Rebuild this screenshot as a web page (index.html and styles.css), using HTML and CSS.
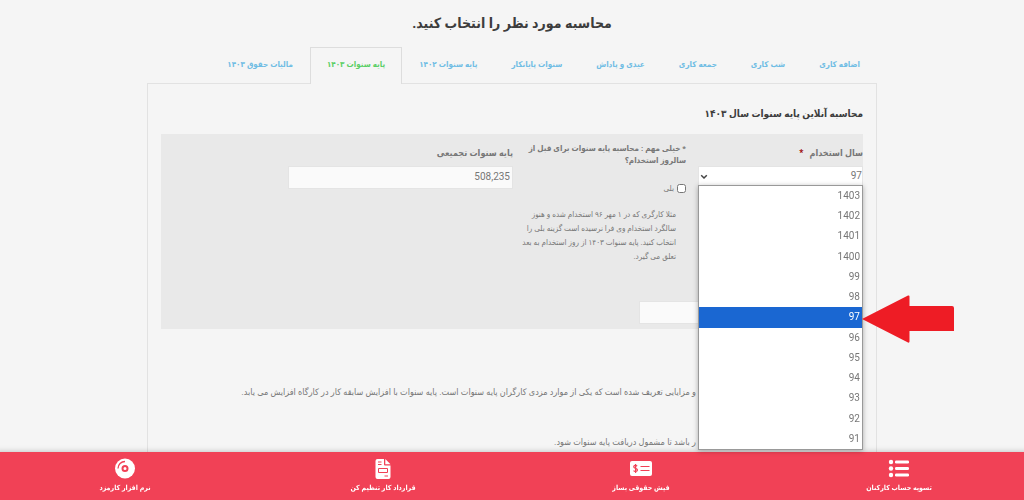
FILE: index.html
```html
<!DOCTYPE html>
<html lang="fa" dir="rtl">
<head>
<meta charset="utf-8">
<meta name="viewport" content="width=device-width, initial-scale=1">
<title>محاسبه آنلاین پایه سنوات</title>
<link rel="stylesheet" href="styles.css">
</head>
<body>
<main class="page">
  <h1 class="title">محاسبه مورد نظر را انتخاب کنید.</h1>
  <nav class="tabs">
    <a class="tab" href="#overtime">اضافه کاری</a>
    <a class="tab" href="#night">شب کاری</a>
    <a class="tab" href="#friday">جمعه کاری</a>
    <a class="tab" href="#bonus">عیدی و پاداش</a>
    <a class="tab" href="#severance">سنوات پایانکار</a>
    <a class="tab" href="#base1402">پایه سنوات ۱۴۰۲</a>
    <a class="tab tab-active" href="#base1403">پایه سنوات ۱۴۰۳</a>
    <a class="tab" href="#tax">مالیات حقوق ۱۴۰۳</a>
  </nav>
  <section class="panel">
    <h2 class="subtitle">محاسبه آنلاین پایه سنوات سال ۱۴۰۳</h2>
    <form class="form">
      <div class="field field-year">
        <label class="label" for="year">سال استخدام <span class="required">*</span></label>
        <div class="select-wrap">
          <select class="control select" id="year"><option>97</option></select>
          <svg class="chevron" viewBox="0 0 8 6"><path d="M1.2 1.2 4 4l2.8-2.8"/></svg>
          <ul class="menu" role="listbox" aria-label="سال استخدام">
            <li class="option" role="option">1403</li>
            <li class="option" role="option">1402</li>
            <li class="option" role="option">1401</li>
            <li class="option" role="option">1400</li>
            <li class="option" role="option">99</li>
            <li class="option" role="option">98</li>
            <li class="option option-selected" role="option" aria-selected="true">97
              <svg class="arrow" viewBox="0 0 92 48"><path d="M0 24 46 .5q1.500-.5 1.500 1V11H90q2 0 2 2v23H47.500v10.500q0 1.500-1.500 1z"/></svg>
            </li>
            <li class="option" role="option">96</li>
            <li class="option" role="option">95</li>
            <li class="option" role="option">94</li>
            <li class="option" role="option">93</li>
            <li class="option" role="option">92</li>
            <li class="option" role="option">91</li>
          </ul>
        </div>
      </div>
      <fieldset class="field field-check">
        <legend class="legend">* خیلی مهم : محاسبه پایه سنوات برای قبل از سالروز استخدام؟</legend>
        <label class="check"><input class="checkbox" type="checkbox">بلی</label>
        <p class="hint">مثلا کارگری که در ۱ مهر ۹۶ استخدام شده و هنوز<br>سالگرد استخدام وی فرا نرسیده است گزینه بلی را<br>انتخاب کنید. پایه سنوات ۱۴۰۳ از روز استخدام به بعد<br>تعلق می گیرد.</p>
      </fieldset>
      <div class="field">
        <label class="label" for="total">پایه سنوات تجمیعی</label>
        <input class="control" id="total" type="text" value="508,235">
      </div>
      <div class="field field-result">
        <input class="control" type="text" aria-label="نتیجه">
      </div>
    </form>
    <p class="text">و مزایایی تعریف شده است که یکی از موارد مزدی کارگران پایه سنوات است. پایه سنوات با افزایش سابقه کار در کارگاه افزایش می یابد.</p>
    <p class="text">ر باشد تا مشمول دریافت پایه سنوات شود.</p>
  </section>
</main>
<nav class="bar">
  <a class="bar-item" href="#settlement">
    <svg class="icon" viewBox="0 0 22 22"><g fill="#fff"><circle cx="3" cy="4" r="2.200"/><circle cx="3" cy="10.500" r="2.200"/><circle cx="3" cy="17" r="2.200"/><rect x="7" y="2.600" width="14" height="2.800" rx="1.200"/><rect x="7" y="9.100" width="14" height="2.800" rx="1.200"/><rect x="7" y="15.600" width="14" height="2.800" rx="1.200"/></g></svg>
    <span>تسویه حساب کارکنان</span>
  </a>
  <a class="bar-item" href="#payslip">
    <svg class="icon" viewBox="0 0 22 22"><rect x="0" y="3" width="22" height="15" rx="2" fill="#fff"/><path d="M10.500 8.500h9M10.500 12.500h9M7.200 8.200C5.800 6.700 3.700 7.200 3.700 8.700c0 2.200 3.800 1.200 3.800 3.400 0 1.600-2.600 2-4 .5M5.600 6v9" fill="none" stroke="#f14156" stroke-width="1.200"/></svg>
    <span>فیش حقوقی بساز</span>
  </a>
  <a class="bar-item" href="#contract">
    <svg class="icon" viewBox="0 0 22 22"><path d="M5.500 1H12v5.500q0 1 1 1h5.500V19q0 2-2 2h-11q-2 0-2-2V3q0-2 2-2zM13.300 1l5.200 5.200h-5.200z" fill="#fff"/><path d="M6 4h3.500M6 6.500h3.500M12.500 18H16M6.500 10.500h9v4h-9z" fill="none" stroke="#f14156" stroke-width="1"/></svg>
    <span>قرارداد کار تنظیم کن</span>
  </a>
  <a class="bar-item" href="#software">
    <svg class="icon" viewBox="0 0 22 22"><circle cx="11" cy="10.500" r="10" fill="#fff"/><circle cx="11" cy="10.500" r="2.500" fill="none" stroke="#f14156" stroke-width="2"/><path d="M4 10.500a7 7 0 0 1 7-7" fill="none" stroke="#f14156" stroke-width="1.300"/></svg>
    <span>نرم افزار کارمزد</span>
  </a>
</nav>
</body>
</html>
```
FILE: styles.css
```css
* { box-sizing: border-box; }

body {
  margin: 0;
  background: #f5f5f5;
  color: #777;
  font-family: Roboto, "DejaVu Sans Condensed", "DejaVu Sans", sans-serif;
  font-size: 9px;
}

.page {
  display: flex;
  flex-direction: column;
  width: calc(100% - 32px);
  max-width: 730px;
  min-height: 100vh;
  margin: 0 auto;
}

.title {
  margin: 0;
  padding-top: 11px;
  text-align: center;
  font-size: 14px;
  line-height: 24px;
  color: #3d3d3d;
}

.tabs {
  display: flex;
  margin-top: 12px;
}

.tab {
  height: 36px;
  padding: 0 16px;
  border: 1px solid transparent;
  border-bottom: 0;
  font-size: 8px;
  font-weight: bold;
  line-height: 34px;
  white-space: nowrap;
  text-decoration: none;
  color: #70bde4;
}

.tab-active {
  position: relative;
  height: 37px;
  margin-bottom: -1px;
  border-color: #ddd;
  background: #f5f5f5;
  color: #5bcf65;
}

.panel {
  flex: 1;
  padding: 20px 13px 60px;
  border: 1px solid #e2e2e2;
  border-bottom: 0;
}

.subtitle {
  margin: 0 0 10px;
  font-size: 10px;
  line-height: 20px;
  color: #3d3d3d;
}

.form {
  display: grid;
  grid-template-columns: 165px 161px 225px;
  grid-template-rows: 158px auto;
  column-gap: 12px;
  height: 195px;
  padding-top: 9px;
  background: #e9e9e9;
}

.field {
  min-width: 0;
  margin: 0;
  padding: 0;
  border: 0;
}

.label {
  display: block;
  height: 23px;
  font-size: 9px;
  font-weight: bold;
  line-height: 20px;
}

.required {
  margin-right: 4px;
  color: #900;
}

.control {
  display: block;
  width: 100%;
  height: 23px;
  padding: 0 2px 2px;
  border: 1px solid #e4e4e4;
  border-radius: 0;
  background: #fafafa;
  color: #777;
  font: 10px Roboto, sans-serif;
}

.select-wrap { position: relative; }

.select {
  padding: 0 0 4px;
  appearance: none;
  background: #fff;
}

.chevron {
  position: absolute;
  top: 8px;
  left: 2px;
  width: 8px;
  height: 6px;
  fill: none;
  stroke: #444;
  stroke-width: 1.5;
}

.menu {
  position: absolute;
  z-index: 3;
  top: 19px;
  left: 0;
  right: 0;
  display: flex;
  flex-direction: column;
  height: 265px;
  margin: 0;
  padding: 0;
  list-style: none;
  border: 1px solid #999;
  background: #fff;
  box-shadow: 0 1px 5px rgba(0, 0, 0, .3);
  font-size: 10px;
}

.option {
  position: relative;
  flex: 1;
  padding: 0 2px;
  line-height: 20px;
}

.option-selected {
  background: #1a67d2;
  color: #fff;
}

.arrow {
  position: absolute;
  top: -12px;
  left: 100%;
  width: 92px;
  height: 48px;
  fill: #ee1c25;
}

.legend {
  padding: 0;
  font-size: 8px;
  font-weight: bold;
  line-height: 12px;
}

.check {
  display: flex;
  align-items: center;
  gap: 3px;
  margin-top: 15px;
  font-size: 8px;
  line-height: 13px;
}

.checkbox {
  width: 9px;
  height: 9px;
  margin: 0;
}

.hint {
  margin: 13px 10px 0 0;
  font-size: 8px;
  line-height: 14px;
  white-space: nowrap;
}

.field-result {
  grid-column: 1 / 3;
  width: 224px;
}

.text {
  margin: 53px 0 0;
  padding-right: 167px;
  font-size: 9px;
  line-height: 20px;
  white-space: nowrap;
}

.text + .text { margin-top: 30px; }

.bar {
  position: fixed;
  z-index: 2;
  right: -4px;
  bottom: 0;
  left: -4px;
  display: flex;
  height: 48px;
  background: #f14156;
  box-shadow: 0 0 6px rgba(0, 0, 0, .25);
}

.bar-item {
  display: flex;
  flex: 1;
  flex-direction: column;
  align-items: center;
  padding-top: 6px;
  font-size: 7px;
  font-weight: bold;
  line-height: 16px;
  text-decoration: none;
  color: #fff;
}

.icon {
  width: 22px;
  height: 22px;
}
```
